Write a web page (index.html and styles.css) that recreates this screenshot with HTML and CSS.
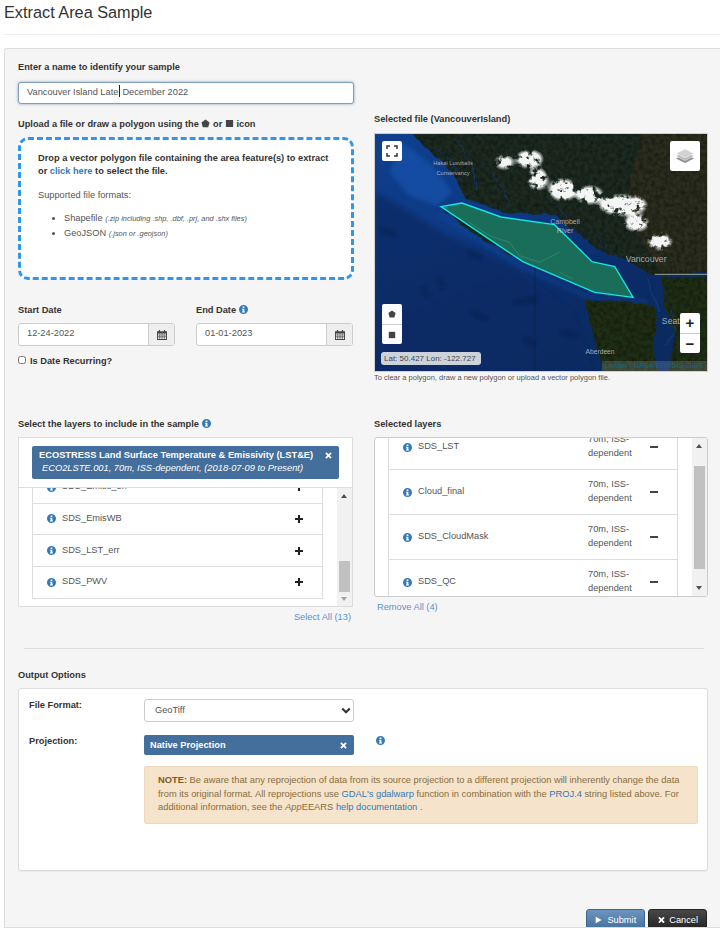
FILE: index.html
```html
<!DOCTYPE html>
<html lang="en">
<head>
  <meta charset="UTF-8">
  <meta name="viewport" content="width=device-width, initial-scale=1.0">
  <title>Extract Area Sample</title>
  <link rel="stylesheet" href="styles.css">
</head>
<body>
  <svg class="icon-defs" aria-hidden="true">
    <symbol id="i-info" viewBox="0 0 16 16">
      <path fill-rule="evenodd" d="M8 0a8 8 0 1 1 0 16A8 8 0 0 1 8 0zM6.400 2.600v2.600h3.200V2.600zM5.400 6.600v1.800h1v3H5.400v1.800h5.200v-1.800h-1V6.600z"/>
    </symbol>
    <symbol id="i-cal" viewBox="0 0 16 16">
      <path fill-rule="evenodd" d="M3 0h2v2h6V0h2v2h3v14H0V2h3zM1.500 5.500v2h2.500v-2zM5 5.500v2h2.500v-2zM8.500 5.500v2H11v-2zM12 5.500v2h2.500v-2zM1.500 8.500v2h2.500v-2zM5 8.500v2h2.500v-2zM8.500 8.500v2H11v-2zM12 8.500v2h2.500v-2zM1.500 11.500v3h2.500v-3zM5 11.500v3h2.500v-3zM8.500 11.500v3H11v-3zM12 11.500v3h2.500v-3z"/>
    </symbol>
    <symbol id="i-plus" viewBox="0 0 10 10"><path d="M3.700 0h2.600v3.700H10v2.600H6.300V10H3.700V6.300H0V3.700h3.700z"/></symbol>
    <symbol id="i-times" viewBox="0 0 10 10"><path d="M2.200.4 5 3.200 7.800.4l1.800 1.800L6.800 5l2.800 2.800-1.800 1.800L5 6.800 2.200 9.600.4 7.800 3.200 5 .4 2.200z"/></symbol>
  </svg>

  <header class="page-head">
    <h1>Extract Area Sample</h1>
  </header>

  <main class="panel">
    <div class="cols top-cols">
      <section class="col-left">
        <div class="label">Enter a name to identify your sample</div>
        <div class="name-input">Vancouver Island Late<span class="text-caret"></span>December 2022</div>

        <div class="label upload-label">Upload a file or draw a polygon using the
          <svg class="inline-shape" viewBox="0 0 10 10"><path d="M5 .5 9.500 3.800 8 9.300H2L.5 3.800z"/></svg> or
          <svg class="inline-shape" viewBox="0 0 10 10"><path d="M1 1h8v8H1z"/></svg> icon</div>
        <div class="dropzone">
          <p class="drop-title">Drop a vector polygon file containing the area feature(s) to extract or <a href="#">click here</a> to select the file.</p>
          <p class="drop-sub">Supported file formats:</p>
          <ul>
            <li>Shapefile <small>(.zip including .shp, .dbf, .prj, and .shx files)</small></li>
            <li>GeoJSON <small>(.json or .geojson)</small></li>
          </ul>
        </div>

        <div class="date-row">
          <div class="date-field">
            <div class="label">Start Date</div>
            <div class="date-input"><span>12-24-2022</span><b><svg class="cal"><use href="#i-cal"/></svg></b></div>
          </div>
          <div class="date-field">
            <div class="label">End Date <svg class="info"><use href="#i-info"/></svg></div>
            <div class="date-input"><span>01-01-2023</span><b><svg class="cal"><use href="#i-cal"/></svg></b></div>
          </div>
        </div>
        <label class="label recurring"><input type="checkbox"> Is Date Recurring?</label>
      </section>

      <section class="col-right">
        <div class="label">Selected file (VancouverIsland)</div>
        <div class="map">
          <svg class="map-img" viewBox="48 105 993 711" preserveAspectRatio="none">
            <defs>
              <linearGradient id="sea" x1="0" y1="0" x2="0.55" y2="1">
                <stop offset="0" stop-color="#103f8c"/>
                <stop offset="0.4" stop-color="#0e3a84"/>
                <stop offset="0.75" stop-color="#0a2c68"/>
                <stop offset="1" stop-color="#0a2a60"/>
              </linearGradient>
              <filter id="rough" x="-10%" y="-10%" width="120%" height="120%" color-interpolation-filters="sRGB">
                <feTurbulence type="fractalNoise" baseFrequency="0.03" numOctaves="4" seed="7"/>
                <feDisplacementMap in="SourceGraphic" scale="16" xChannelSelector="R" yChannelSelector="G"/>
                <feGaussianBlur stdDeviation="1"/>
              </filter>
              <!-- speckled snow: blurred blobs cut by noise -->
              <filter id="snow" x="-30%" y="-30%" width="160%" height="160%" color-interpolation-filters="sRGB">
                <feGaussianBlur in="SourceAlpha" stdDeviation="9" result="soft"/>
                <feTurbulence type="fractalNoise" baseFrequency="0.05" numOctaves="4" seed="11"/>
                <feColorMatrix values="0 0 0 0 1  0 0 0 0 1  0 0 0 0 1  3.200 0 0 0 -0.700" result="noise"/>
                <feComposite in="soft" in2="noise" operator="arithmetic" k1="1"/>
                <feComponentTransfer result="mask"><feFuncA type="linear" slope="2.200" intercept="-0.400"/></feComponentTransfer>
                <feFlood flood-color="#f4f6f6"/>
                <feComposite in2="mask" operator="in"/>
                <feGaussianBlur stdDeviation="1.800"/>
              </filter>
              <filter id="grain" x="0" y="0" width="100%" height="100%" color-interpolation-filters="sRGB">
                <feTurbulence type="fractalNoise" baseFrequency="0.08" numOctaves="3" seed="3"/>
                <feColorMatrix values="0 0 0 0 0  0 0 0 0 0  0 0 0 0 0  1.600 0 0 0 -0.550"/>
              </filter>
              <filter id="soft-blur" x="-20%" y="-20%" width="140%" height="140%"><feGaussianBlur stdDeviation="6"/></filter>
              <clipPath id="map-clip"><rect x="48" y="105" width="993" height="711"/></clipPath>
              <clipPath id="land-clip">
                <path d="M150 95 205 150 275 215 320 300 430 340 590 350 660 410 720 455 800 482 870 525 1060 520V95zM675 605 800 605 885 625 890 690 875 740 900 830H735L705 720zM905 535H1060V830H925L945 700 915 620z"/>
              </clipPath>
            </defs>
            <g clip-path="url(#map-clip)">
              <rect x="48" y="105" width="993" height="711" fill="url(#sea)"/>
              <path d="M48 285C120 300 190 380 330 440L490 520 640 640 700 816H48z" fill="#0a2a63" opacity="0.75" filter="url(#soft-blur)"/>
              <path d="M130 130 220 200 280 280 235 320 150 290 90 220z" fill="#1252ad" opacity="0.7" filter="url(#soft-blur)"/>
              <path d="M240 345 480 500 680 590 860 610" fill="none" stroke="#1253b0" stroke-width="16" opacity="0.3" filter="url(#soft-blur)"/>
              <g stroke="#061a40" stroke-width="7" stroke-linecap="round" filter="url(#soft-blur)" opacity="0.8" fill="none">
                <path d="M70 390 110 410M330 460 360 475M190 570 205 590M240 540 250 565M470 610 530 600M610 700 650 710M340 640 380 660M500 720 520 735"/>
              </g>
              <g filter="url(#rough)">
                <path d="M150 95 205 150 275 215 320 300 430 340 590 350 660 410 720 455 800 482 870 525 1060 520V95z" fill="#1c2a20"/>
                <path d="M850 95 1060 95V520H900L790 330z" fill="#2b2d1e"/>
                <path d="M255 332 310 315 425 356 585 378 695 487 765 506 818 594 705 578 490 486 330 396z" fill="#14291c"/>
                <path d="M675 605 800 605 885 625 890 690 875 740 900 830H735L705 720zM905 535H1060V830H925L945 700 915 620z" fill="#1f2e15"/>
              </g>
              <g filter="url(#rough)" fill="none" stroke="#14468e" stroke-width="2.500" opacity="0.8">
                <path d="M225 150 280 190 300 240M290 120 340 190 350 270M370 190 420 250 450 320M560 290 610 340 650 400M700 400 730 430 770 470M860 540 880 590 900 640M930 620 950 690 920 740"/>
              </g>
              <path d="M885 526 1041 526" stroke="#7f8d88" stroke-width="4" fill="none"/>
              <g clip-path="url(#land-clip)">
                <rect x="48" y="105" width="993" height="711" filter="url(#grain)" opacity="0.45"/>
              </g>
              <g fill="#fff" filter="url(#snow)">
                <ellipse cx="510" cy="180" rx="38" ry="24"/>
                <ellipse cx="535" cy="240" rx="28" ry="30"/>
                <ellipse cx="610" cy="272" rx="40" ry="30"/>
                <ellipse cx="690" cy="288" rx="38" ry="24"/>
                <ellipse cx="790" cy="318" rx="70" ry="28"/>
                <ellipse cx="830" cy="372" rx="34" ry="22"/>
                <ellipse cx="900" cy="428" rx="34" ry="22"/>
                <ellipse cx="435" cy="190" rx="26" ry="18"/>
              </g>
              <path d="M526 490V816" stroke="#0a1c3c" stroke-width="1.500" fill="none"/>
              <path d="M245 323 308 312 425 354 585 377 697 488 765 503 820 595 705 580 490 488z" fill="#1fa58c" fill-opacity="0.55" stroke="#14e8e0" stroke-width="4"/>
              <g fill="none" stroke="#7fd8c8" stroke-width="1.500" opacity="0.45">
                <path d="M330 370 390 410 450 430 480 470 540 490 600 460M600 520 640 540"/>
              </g>
              <g class="map-text">
                <text x="222" y="199" font-size="17">Hakai Luxvbalis</text>
                <text x="232" y="228" font-size="17">Conservancy</text>
                <text x="572" y="374" font-size="21">Campbell</text>
                <text x="592" y="403" font-size="21">River</text>
                <text x="798" y="488" font-size="26">Vancouver</text>
                <text x="906" y="675" font-size="26">Seattle</text>
                <text x="678" y="765" font-size="20">Aberdeen</text>
              </g>
            </g>
          </svg>

          <button class="map-btn fullscreen" type="button" aria-label="Full screen">
            <svg viewBox="0 0 12 12"><path d="M1 4V1h3M8 1h3v3M11 8v3H8M4 11H1V8"/></svg>
          </button>
          <div class="map-btn layers">
            <svg viewBox="0 0 20 20">
              <path d="M10 8 19 12.500 10 17 1 12.500z" fill="#8f8f8f"/>
              <path d="M10 5.500 19 10 10 14.500 1 10z" fill="#b5b5b5" stroke="#fff" stroke-width="0.500"/>
              <path d="M10 3 19 7.500 10 12 1 7.500z" fill="#d2d2d2" stroke="#fff" stroke-width="0.500"/>
            </svg>
          </div>
          <div class="map-stack draw-tools">
            <span><svg viewBox="0 0 10 10"><path d="M5 .5 9.500 3.800 8 9.300H2L.5 3.800z"/></svg></span>
            <span><svg viewBox="0 0 10 10"><path d="M1 1h8v8H1z"/></svg></span>
          </div>
          <div class="map-stack zoom-tools">
            <span>+</span>
            <span>&minus;</span>
          </div>
          <div class="coords">Lat: 50.427 Lon: -122.727</div>
          <div class="attrib"><a href="#">Leaflet</a> | <a href="#">NASA EOSDIS GIBS</a></div>
        </div>
        <p class="map-note">To clear a polygon, draw a new polygon or upload a vector polygon file.</p>
      </section>
    </div>

    <div class="cols layer-cols">
      <section class="col-left">
        <div class="label">Select the layers to include in the sample <svg class="info"><use href="#i-info"/></svg></div>
        <div class="layer-box">
          <div class="product-wrap">
            <div class="product">
              <div class="product-text">
                <strong>ECOSTRESS Land Surface Temperature &amp; Emissivity (LST&amp;E)</strong>
                <em>ECO2LSTE.001, 70m, ISS-dependent, (2018-07-09 to Present)</em>
              </div>
              <svg class="times"><use href="#i-times"/></svg>
            </div>
          </div>
          <div class="list-body">
            <ul class="layer-list available">
              <li><svg class="info"><use href="#i-info"/></svg><span class="name">SDS_Emiss_err</span><svg class="plus"><use href="#i-plus"/></svg></li>
              <li><svg class="info"><use href="#i-info"/></svg><span class="name">SDS_EmisWB</span><svg class="plus"><use href="#i-plus"/></svg></li>
              <li><svg class="info"><use href="#i-info"/></svg><span class="name">SDS_LST_err</span><svg class="plus"><use href="#i-plus"/></svg></li>
              <li><svg class="info"><use href="#i-info"/></svg><span class="name">SDS_PWV</span><svg class="plus"><use href="#i-plus"/></svg></li>
            </ul>
            <div class="scrollbar bar-left"><i class="arrow-up"></i><i class="thumb"></i><i class="arrow-down"></i></div>
          </div>
        </div>
        <div class="select-all"><a href="#">Select All (13)</a></div>
      </section>

      <section class="col-right">
        <div class="label">Selected layers</div>
        <div class="layer-box chosen-box">
          <ul class="layer-list chosen">
            <li><svg class="info"><use href="#i-info"/></svg><span class="name">SDS_LST</span><span class="meta">70m, ISS-dependent</span><i class="minus"></i></li>
            <li><svg class="info"><use href="#i-info"/></svg><span class="name">Cloud_final</span><span class="meta">70m, ISS-dependent</span><i class="minus"></i></li>
            <li><svg class="info"><use href="#i-info"/></svg><span class="name">SDS_CloudMask</span><span class="meta">70m, ISS-dependent</span><i class="minus"></i></li>
            <li><svg class="info"><use href="#i-info"/></svg><span class="name">SDS_QC</span><span class="meta">70m, ISS-dependent</span><i class="minus"></i></li>
          </ul>
          <div class="scrollbar bar-right"><i class="arrow-up"></i><i class="thumb"></i><i class="arrow-down"></i></div>
        </div>
        <div class="remove-all"><a href="#">Remove All (4)</a></div>
      </section>
    </div>

    <hr class="divider">

    <div class="label">Output Options</div>
    <section class="output-card">
      <div class="opt-row">
        <div class="label opt-label">File Format:</div>
        <div class="fake-select">GeoTiff
          <svg viewBox="0 0 12 8"><path d="M1.500 1.500 6 6l4.500-4.500"/></svg>
        </div>
      </div>
      <div class="opt-row proj-row">
        <div class="label opt-label">Projection:</div>
        <div class="proj-tag"><span>Native Projection</span><svg class="times"><use href="#i-times"/></svg></div>
        <svg class="info proj-info"><use href="#i-info"/></svg>
      </div>
      <div class="note">
        <strong>NOTE:</strong> Be aware that any reprojection of data from its source projection to a different projection will inherently change the data from its original format. All reprojections use <a href="#">GDAL's gdalwarp</a> function in combination with the <a href="#">PROJ.4</a> string listed above. For additional information, see the <em>App</em>EEARS <a href="#">help documentation</a> .
      </div>
    </section>

    <div class="actions">
      <button class="btn btn-submit" type="button"><svg viewBox="0 0 10 10"><path d="M1 .5 9.500 5 1 9.500z"/></svg>Submit</button>
      <button class="btn btn-cancel" type="button"><svg viewBox="0 0 10 10"><use href="#i-times"/></svg>Cancel</button>
    </div>
  </main>
</body>
</html>
```

FILE: styles.css
```css
/* Extract Area Sample form */
* {
  box-sizing: border-box;
}

html, body {
  height: 928px;
  overflow: hidden;
}

body {
  margin: 0;
  background: #fff;
  font-family: "Liberation Sans", Arial, sans-serif;
  font-size: 9.250px;
  line-height: 14px;
  color: #555;
}

a {
  color: #337ab7;
  text-decoration: none;
}

.icon-defs {
  position: absolute;
  width: 0;
  height: 0;
}

.page-head {
  height: 35px;
  margin-left: 4px;
  border-bottom: 1px solid #eee;
}

h1 {
  margin: 0;
  padding-top: 2px;
  font-size: 16.300px;
  line-height: 20px;
  font-weight: 400;
  color: #333;
}

.panel {
  height: 880px;
  margin: 13px 0 0 4px;
  padding: 11px 0 0 13px;
  overflow: hidden;
  background: #f5f5f5;
  border: 1px solid #ddd;
  border-right: 0;
  border-top-left-radius: 3px;
}

.label {
  height: 14px;
  line-height: 15px;
  font-weight: 700;
  color: #333;
}

.cols {
  display: flex;
  gap: 20px;
}

.col-left {
  width: 336px;
}

.col-right {
  width: 334px;
}

.info {
  width: 9px;
  height: 9px;
  fill: #337ab7;
  vertical-align: -1px;
}

/* name + upload */
.name-input {
  height: 22px;
  margin-top: 8px;
  padding: 0 8px;
  line-height: 18px;
  background: #fff;
  border: 1px solid #7f9dbd;
  border-radius: 3px;
  box-shadow: 0 0 3px rgba(68, 110, 155, 0.6);
}

.text-caret {
  display: inline-block;
  width: 1px;
  height: 12px;
  margin: 0 2px 0 1px;
  background: #222;
  vertical-align: -2px;
}

.upload-label {
  margin-top: 13px;
}

.inline-shape {
  width: 9px;
  height: 9px;
  fill: #444;
  vertical-align: -1px;
}

.dropzone {
  height: 143px;
  margin-top: 6px;
  padding: 12px 17px;
  background: #fff;
  border: 3px dashed #2f96ee;
  border-radius: 10px;
}

.dropzone p {
  margin: 0;
}

.drop-title {
  font-weight: 700;
  color: #333;
  line-height: 13px;
}

.drop-sub {
  padding-top: 10px;
}

.dropzone ul {
  margin: 9px 0 0;
  padding-left: 26px;
}

.dropzone li {
  height: 14.500px;
}

.dropzone small {
  font-size: 7.400px;
  line-height: 1;
  font-style: italic;
}

/* dates */
.date-row {
  display: flex;
  gap: 21px;
  margin-top: 23px;
}

.date-field {
  width: 157px;
}

.date-input {
  display: flex;
  height: 23px;
  margin-top: 6px;
  background: #fff;
  border: 1px solid #ccc;
  border-radius: 3px;
}

.date-input span {
  flex: 1;
  padding-left: 8px;
  line-height: 19px;
}

.date-input b {
  display: flex;
  align-items: center;
  justify-content: center;
  width: 26px;
  background: #eee;
  border-left: 1px solid #ccc;
}

.cal {
  width: 10px;
  height: 10px;
  fill: #444;
}

.recurring {
  display: flex;
  align-items: center;
  gap: 4px;
  margin-top: 8px;
}

.recurring input {
  width: 8px;
  height: 8px;
  margin: 0 0 2px;
}

/* map */
.top-cols .col-right {
  padding-top: 52px;
}

.map {
  position: relative;
  height: 239px;
  margin-top: 7px;
  background: #0e3b85;
  border: 1px solid #d0d0d0;
  overflow: hidden;
}

.map-img {
  display: block;
  width: 100%;
  height: 100%;
}

.map-text text {
  font-family: "Liberation Sans", Arial, sans-serif;
  fill: #d8d8d8;
  fill-opacity: 0.75;
}

.map-btn {
  position: absolute;
  display: flex;
  align-items: center;
  justify-content: center;
  padding: 0;
  background: #fff;
  border: 0;
  border-radius: 2px;
}

.fullscreen {
  left: 7px;
  top: 7px;
  width: 20px;
  height: 20px;
}

.fullscreen svg {
  width: 12px;
  height: 12px;
  fill: none;
  stroke: #333;
  stroke-width: 1.500;
}

.layers {
  right: 7px;
  top: 7px;
  width: 30px;
  height: 30px;
}

.layers svg {
  width: 20px;
  height: 20px;
}

.map-stack {
  position: absolute;
  width: 20px;
  background: #fff;
  border-radius: 2px;
}

.map-stack span {
  display: flex;
  align-items: center;
  justify-content: center;
  height: 20px;
}

.map-stack span + span {
  border-top: 1px solid #ccc;
}

.draw-tools {
  left: 7px;
  top: 170px;
}

.draw-tools svg {
  width: 8px;
  height: 8px;
  fill: #444;
}

.zoom-tools {
  right: 7px;
  top: 179px;
  font-size: 15px;
  font-weight: 700;
  color: #222;
}

.coords {
  position: absolute;
  left: 6px;
  bottom: 6px;
  width: 100px;
  height: 13px;
  padding-left: 3px;
  font-size: 8px;
  line-height: 13px;
  background: #cdd3dc;
  border-radius: 3px;
  color: #444;
}

.attrib {
  position: absolute;
  right: 0;
  bottom: 0;
  padding: 0 3px;
  font-size: 7.500px;
  line-height: 10px;
  background: rgba(255, 255, 255, 0.15);
  color: #456;
}

.attrib a {
  color: #14608f;
}

.map-note {
  margin: 0;
  font-size: 7.500px;
  line-height: 12px;
}

/* layer lists */
.layer-cols {
  margin-top: 33px;
}

.layer-box {
  width: 335px;
  height: 170px;
  margin-top: 6px;
  overflow: hidden;
  background: #fff;
  border: 1px solid #ddd;
}

.product-wrap {
  height: 50px;
  padding: 8px 13px;
  border-bottom: 1px solid #ddd;
}

.product {
  display: flex;
  justify-content: space-between;
  height: 33px;
  padding: 3px 7px;
  background: #446e9b;
  border-radius: 2px;
  color: #fff;
}

.product-text strong,
.product-text em {
  display: block;
  font-size: 9.300px;
  line-height: 13px;
}

.product-text em {
  padding-left: 3px;
}

.times {
  flex: none;
  width: 7px;
  height: 7px;
  margin-top: 3px;
  fill: #fff;
}

.list-body {
  display: flex;
  height: 119px;
  padding-left: 13px;
  overflow: hidden;
}

.layer-list {
  margin: 0;
  padding: 0;
  list-style: none;
}

.available {
  width: 292px;
  margin-top: -16px;
}

.layer-list li {
  display: flex;
  align-items: center;
  background: #fff;
  border: 1px solid #ddd;
  border-top: 0;
}

.available li {
  height: 31.670px;
  padding: 0 19px 0 14px;
}

.name {
  flex: 1;
  margin-left: 6px;
  padding-bottom: 2px;
}

.plus {
  width: 8px;
  height: 8px;
  fill: #222;
}

/* scrollbars are drawn by hand so they sit at the same spot every time */
.scrollbar {
  position: relative;
  flex: none;
  background: #f1f1f1;
}

.scrollbar .thumb {
  position: absolute;
  display: block;
  background: #c1c1c1;
}

.arrow-up,
.arrow-down {
  position: absolute;
  left: 50%;
  margin-left: -3.500px;
  border-left: 3.500px solid transparent;
  border-right: 3.500px solid transparent;
}

.arrow-up {
  top: 6px;
  border-bottom: 4px solid #505050;
}

.arrow-down {
  bottom: 6px;
  border-top: 4px solid #a3a3a3;
}

.bar-left {
  width: 15px;
  margin-left: 14px;
}

.bar-left .thumb {
  left: 2px;
  right: 2px;
  top: 73px;
  height: 31px;
}

.chosen-box {
  display: flex;
  width: 334px;
  height: 160px;
  padding-left: 13px;
  border-color: #ccc;
  border-radius: 3px;
}

.chosen {
  width: 292px;
  margin-top: -13px;
}

.chosen li {
  height: 45px;
  padding: 0 19px 0 14px;
}

.chosen .meta {
  width: 56px;
  margin-right: 6px;
  padding-bottom: 2px;
}

.minus {
  width: 8px;
  height: 2px;
  background: #444;
}

.bar-right {
  width: 15px;
  margin-left: 14px;
  background: #f1f1f1;
}

.bar-right .thumb {
  left: 2px;
  right: 2px;
  top: 28px;
  height: 103px;
}

.bar-right .arrow-down {
  border-top-color: #505050;
}

.select-all {
  margin-top: 3px;
  padding-right: 3px;
  text-align: right;
}

.remove-all {
  margin-top: 3px;
  padding-left: 3px;
}

.select-all a,
.remove-all a {
  color: #5b93c7;
}

.divider {
  width: 680px;
  margin: 24px 0 19px 6px;
  border: 0;
  border-top: 1px solid #ddd;
}

/* output options */
.output-card {
  width: 690px;
  height: 183px;
  margin-top: 6px;
  padding: 10px;
  background: #fff;
  border: 1px solid #ddd;
  border-radius: 3px;
  box-shadow: 0 1px 1px rgba(0, 0, 0, 0.05);
}

.opt-row {
  display: flex;
  align-items: flex-start;
}

.opt-label {
  width: 115px;
  margin-top: -1px;
}

.fake-select {
  display: flex;
  align-items: center;
  justify-content: space-between;
  width: 210px;
  height: 23px;
  padding: 0 2px 2px 10px;
  border: 1px solid #ccc;
  border-radius: 3px;
}

.fake-select svg {
  width: 10px;
  height: 7px;
  margin-top: 2px;
  fill: none;
  stroke: #333;
  stroke-width: 2.500;
}

.proj-row {
  margin-top: 13px;
}

.proj-tag {
  display: flex;
  align-items: center;
  justify-content: space-between;
  width: 210px;
  height: 20px;
  padding: 0 7px 0 6px;
  background: #446e9b;
  border-radius: 2px;
  font-weight: 700;
  color: #fff;
}

.proj-tag .times {
  margin-top: 0;
}

.proj-info {
  margin: 1px 0 0 22px;
}

.note {
  width: 554px;
  height: 58px;
  margin: 11px 0 0 115px;
  padding: 7px 13px;
  font-size: 9.330px;
  line-height: 13.500px;
  background: #f5e3cb;
  border: 1px solid #efd9bb;
  border-radius: 2px;
  color: #8a6d3b;
}

.note strong {
  color: #7d5a1e;
}

.actions {
  display: flex;
  justify-content: flex-end;
  gap: 3px;
  margin-top: 38px;
  padding-right: 13px;
}

.btn {
  display: flex;
  align-items: center;
  gap: 5px;
  height: 22px;
  border-radius: 3px 3px 0 0;
  font-family: inherit;
  font-size: 9.250px;
  color: #fff;
}

.btn svg {
  width: 7px;
  height: 8px;
  fill: #fff;
}

.btn-submit {
  padding: 0 8px;
  background: linear-gradient(#6d94bf, #446e9b);
  border: 1px solid #3e648d;
}

.btn-cancel {
  padding: 0 8px 0 9px;
  gap: 4px;
  background: linear-gradient(#484848, #222);
  border: 1px solid #222;
}
```
